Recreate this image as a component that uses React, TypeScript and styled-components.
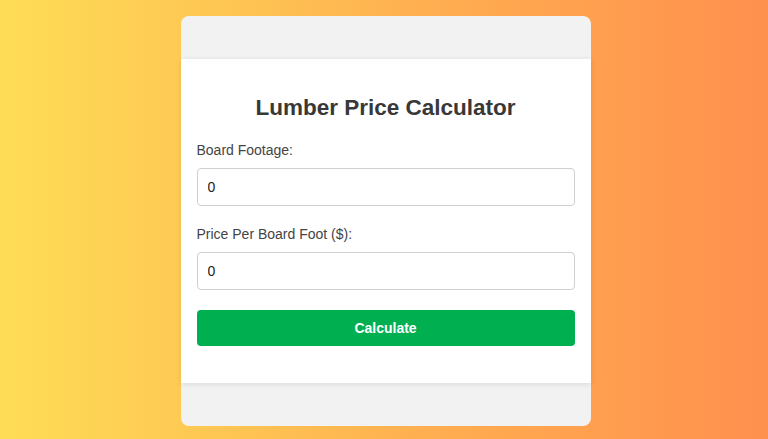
import React, { useState } from "react";
import styled, { createGlobalStyle } from "styled-components";

const GlobalStyle = createGlobalStyle`
  html, body {
    margin: 0;
    padding: 0;
  }
  body {
    font-family: "Liberation Sans", Arial, sans-serif;
  }
  * {
    box-sizing: border-box;
  }
`;

const Page = styled.div`
  width: 100%;
  height: 439px;
  overflow: hidden;
  display: flex;
  justify-content: center;
  padding-top: 16px;
  padding-left: 3px;
  background: linear-gradient(to right, #fedd56 0%, #fec553 30%, #ffab50 60%, #ff904e 100%);
`;

const Panel = styled.div`
  width: 410px;
  height: 410px;
  background-color: #f2f2f2;
  border-radius: 8px;
  padding: 43px 0;
`;

const Card = styled.div`
  background-color: #ffffff;
  padding: 16px 16px 37px 16px;
  box-shadow: 0 1px 6px rgba(0, 0, 0, 0.1);
`;

const Title = styled.h2`
  margin: 20px 0 21px;
  font-size: 22.5px;
  line-height: 26px;
  font-weight: 700;
  color: #383838;
  text-align: center;
`;

const Field = styled.div`
  display: flex;
  flex-direction: column;
  margin-bottom: 20px;
`;

const Label = styled.label`
  font-size: 14px;
  line-height: 16px;
  color: #444;
  margin-bottom: 10px;
`;

const Input = styled.input`
  width: 100%;
  height: 38px;
  padding: 0 10px;
  font-family: "Liberation Sans", Arial, sans-serif;
  font-size: 14px;
  color: #222;
  border: 1px solid #cfcfcf;
  border-radius: 4px;
  outline: none;
`;

const Button = styled.button`
  width: 100%;
  height: 36px;
  border: none;
  border-radius: 4px;
  background-color: #00af50;
  color: #ffffff;
  font-family: "Liberation Sans", Arial, sans-serif;
  font-size: 14px;
  font-weight: 700;
  cursor: pointer;
`;

const App: React.FC = () => {
  const [footage, setFootage] = useState("0");
  const [price, setPrice] = useState("0");

  return (
    <>
      <GlobalStyle />
      <Page>
        <Panel>
          <Card>
            <Title>Lumber Price Calculator</Title>
            <Field>
              <Label>Board Footage:</Label>
              <Input value={footage} onChange={(e) => setFootage(e.target.value)} />
            </Field>
            <Field>
              <Label>Price Per Board Foot ($):</Label>
              <Input value={price} onChange={(e) => setPrice(e.target.value)} />
            </Field>
            <Button>Calculate</Button>
          </Card>
        </Panel>
      </Page>
    </>
  );
};

export default App;
